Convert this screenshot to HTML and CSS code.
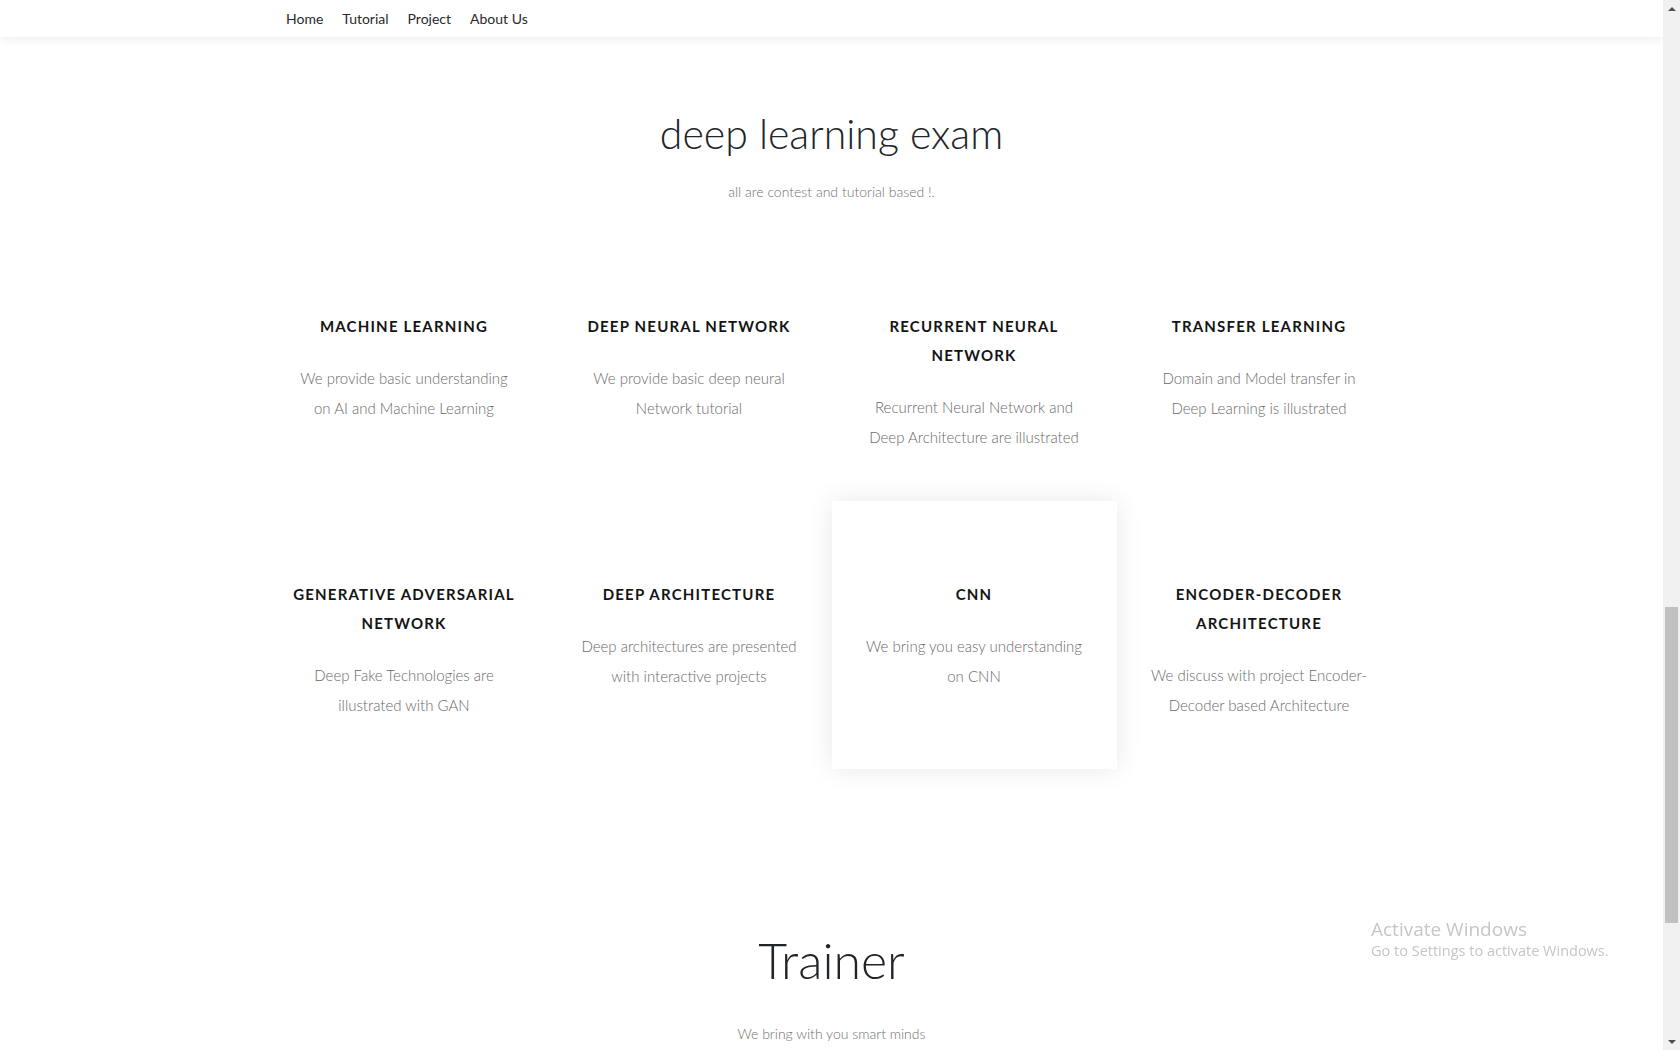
FILE: index.html
```html
<!DOCTYPE html>
<html lang="en">
<head>
<meta charset="utf-8">
<title>deep learning exam</title>
<link rel="stylesheet" href="styles.css">
</head>
<body>
<div class="window">
  <div class="page">
    <header class="topbar">
      <nav class="container nav">
        <a class="nav-link" href="#">Home</a>
        <a class="nav-link" href="#">Tutorial</a>
        <a class="nav-link" href="#">Project</a>
        <a class="nav-link" href="#">About Us</a>
      </nav>
    </header>

    <section class="exam">
      <h2 class="section-title">deep learning exam</h2>
      <p class="section-sub">all are contest and tutorial based !.</p>

      <div class="container grid">
        <div class="card">
          <h4 class="card-title">Machine Learning</h4>
          <p class="card-text">We provide basic understanding<br>on AI and Machine Learning</p>
        </div>
        <div class="card">
          <h4 class="card-title">Deep Neural Network</h4>
          <p class="card-text">We provide basic deep neural<br>Network tutorial</p>
        </div>
        <div class="card">
          <h4 class="card-title">Recurrent Neural<br>Network</h4>
          <p class="card-text">Recurrent Neural Network and<br>Deep Architecture are illustrated</p>
        </div>
        <div class="card">
          <h4 class="card-title">Transfer Learning</h4>
          <p class="card-text">Domain and Model transfer in<br>Deep Learning is illustrated</p>
        </div>
        <div class="card">
          <h4 class="card-title">Generative Adversarial<br>Network</h4>
          <p class="card-text">Deep Fake Technologies are<br>illustrated with GAN</p>
        </div>
        <div class="card">
          <h4 class="card-title">Deep Architecture</h4>
          <p class="card-text">Deep architectures are presented<br>with interactive projects</p>
        </div>
        <div class="card card-active">
          <h4 class="card-title">CNN</h4>
          <p class="card-text">We bring you easy understanding<br>on CNN</p>
        </div>
        <div class="card">
          <h4 class="card-title">Encoder-Decoder<br>Architecture</h4>
          <p class="card-text">We discuss with project Encoder-<br>Decoder based Architecture</p>
        </div>
      </div>
    </section>

    <section class="trainer">
      <h2 class="section-title trainer-title">Trainer</h2>
      <p class="section-sub">We bring with you smart minds</p>
    </section>
  </div>

  <div class="scrollbar">
    <div class="sb-arrow sb-up"></div>
    <div class="sb-track-top"></div>
    <div class="sb-thumb"></div>
    <div class="sb-track-bottom"></div>
    <div class="sb-arrow sb-down"></div>
  </div>
</div>

<div class="activate">
  <div class="activate-title">Activate Windows</div>
  <div class="activate-sub">Go to Settings to activate Windows.</div>
</div>
</body>
</html>
```

FILE: styles.css
```css
* {
  box-sizing: border-box;
}

html, body {
  margin: 0;
  padding: 0;
  height: 1050px;
  overflow: hidden;
  background: #fff;
}

body {
  font-family: Lato, "Open Sans", "Liberation Sans", sans-serif;
  color: #212529;
}

.window {
  display: flex;
  height: 1050px;
}

.page {
  flex: 1;
  min-width: 0;
  overflow: hidden;
}

.container {
  width: 1140px;
  margin: 0 auto;
}

/* ---------- top bar ---------- */
.topbar {
  height: 37px;
  background: #fff;
  box-shadow: 0 2px 12px rgba(0, 0, 0, 0.08);
  position: relative;
  z-index: 2;
}

.nav {
  display: flex;
  align-items: center;
  height: 37px;
  padding: 0 15px;
}

.nav-link {
  padding: 0 9.5px;
  font-size: 14px;
  color: #2a2a2a;
  text-decoration: none;
}

/* ---------- sections ---------- */
.section-title {
  margin: 0;
  text-align: center;
  font-weight: 300;
  font-size: 41px;
  line-height: 48px;
  color: #212529;
}

.section-sub {
  margin: 0;
  text-align: center;
  font-weight: 300;
  font-size: 14px;
  line-height: 24px;
  color: #6f6f6f;
}

.exam {
  padding-top: 73px;
}

.exam .section-sub {
  margin-top: 22px;
}

.grid {
  display: grid;
  grid-template-columns: repeat(4, 285px);
  margin-top: 29px;
}

.card {
  padding: 79px 10px 49px;
  text-align: center;
}

.card-active {
  background: #fff;
  box-shadow: 0 0 26px rgba(0, 0, 0, 0.09);
}

.card-title {
  margin: 0 0 22px;
  font-size: 15px;
  font-weight: 700;
  line-height: 29px;
  letter-spacing: 1.2px;
  text-transform: uppercase;
  color: #141414;
}

.card-text {
  margin: 0;
  font-size: 15px;
  font-weight: 300;
  line-height: 30px;
  color: #6a6a6a;
}

.trainer {
  padding-top: 161px;
}

.trainer-title {
  font-size: 50px;
  line-height: 60px;
}

.trainer .section-sub {
  margin-top: 32px;
}

/* ---------- scrollbar ---------- */
.scrollbar {
  width: 17px;
  flex: 0 0 17px;
  background: #f1f1f1;
  display: flex;
  flex-direction: column;
}

.sb-arrow {
  height: 17px;
  flex: 0 0 17px;
  display: flex;
  align-items: center;
  justify-content: center;
}

.sb-up::before,
.sb-down::before {
  content: "";
  width: 0;
  height: 0;
  border-left: 4px solid transparent;
  border-right: 4px solid transparent;
}

.sb-up::before {
  border-bottom: 4px solid #505050;
}

.sb-down::before {
  border-top: 4px solid #505050;
}

.sb-track-top {
  flex: 0 0 590px;
}

.sb-thumb {
  flex: 0 0 316px;
  margin: 0 2px;
  background: #c1c1c1;
}

.sb-track-bottom {
  flex: 1;
}

/* ---------- OS watermark ---------- */
.activate {
  position: fixed;
  left: 1371px;
  top: 917px;
  color: #c6c6c6;
  font-family: "Open Sans", Lato, sans-serif;
}

.activate-title {
  font-size: 19px;
  line-height: 24px;
}

.activate-sub {
  font-size: 14.5px;
  line-height: 20px;
}
```
